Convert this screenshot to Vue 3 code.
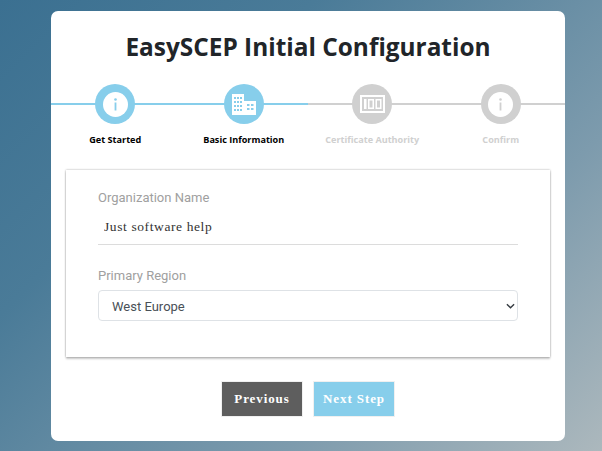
<template>
  <div class="page">
    <div class="card">
      <h1>EasySCEP Initial Configuration</h1>

      <div class="steps">
        <div v-for="step in steps" :key="step.label" class="step" :class="{ done: step.active }">
          <div class="circle">
            <svg v-if="step.icon === 'info'" viewBox="0 0 25 25" width="25" height="25">
              <circle cx="12.5" cy="12.5" r="12.5" fill="#fff" />
              <circle cx="12.5" cy="7.5" r="1.3" class="glyph" />
              <rect x="11.6" y="10.5" width="1.8" height="8" class="glyph" />
            </svg>
            <svg v-else-if="step.icon === 'building'" viewBox="0 0 25 21" width="25" height="21">
              <path fill="#fff" fill-rule="evenodd" d="M1 0h12v21H1zM3 3v2h2V3zm3 0v2h2V3zm3 0v2h2V3zM3 7v2h2V7zm3 0v2h2V7zm3 0v2h2V7zM3 11v2h2v-2zm3 0v2h2v-2zm3 0v2h2v-2zM3 15v2h2v-2zm3 0v2h2v-2zm3 0v2h2v-2z" />
              <path fill="#fff" fill-rule="evenodd" d="M13 7h12v14H13zm3 3v2h2.500v-2zm4 0v2h2.500v-2zm-4 4v2h2.500v-2zm4 0v2h2.500v-2z" />
            </svg>
            <svg v-else viewBox="0 0 25 18" width="25" height="18">
              <path fill="#fff" fill-rule="evenodd" d="M0 0h25v18H0zM2 2v14h21V2z" />
              <path fill="#fff" fill-rule="evenodd" d="M4 4h2.500v10H4zM8 4h6v10H8zm1.500 1.500v7h3v-7zM15.500 4h6v10h-6zM17 5.500v7h3v-7z" />
            </svg>
          </div>
          <div class="step-label">{{ step.label }}</div>
        </div>
      </div>

      <div class="panel">
        <label class="field-label">Organization Name</label>
        <input v-model="orgName" class="text-input" type="text" />

        <label class="field-label region-label">Primary Region</label>
        <div class="select-wrap">
          <select v-model="region" class="region-select">
            <option>West Europe</option>
            <option>North Europe</option>
          </select>
          <svg class="chevron" viewBox="0 0 10 6" width="9" height="6">
            <path d="M1 1l4 4 4-4" fill="none" stroke="#343a40" stroke-width="1.500" />
          </svg>
        </div>
      </div>

      <div class="actions">
        <button class="btn btn-prev">Previous</button>
        <button class="btn btn-next">Next Step</button>
      </div>
    </div>
  </div>
</template>

<script setup>
import { ref } from 'vue'

const orgName = ref('Just software help')
const region = ref('West Europe')

const steps = [
  { label: 'Get Started', icon: 'info', active: true },
  { label: 'Basic Information', icon: 'building', active: true },
  { label: 'Certificate Authority', icon: 'cert', active: false },
  { label: 'Confirm', icon: 'info', active: false }
]
</script>

<style>
html,
body {
  margin: 0;
}
</style>

<style scoped>
.page {
  box-sizing: border-box;
  width: 602px;
  height: 451px;
  padding: 11px 37px 10px 51px;
  overflow: hidden;
  background: linear-gradient(135deg, #3b7091 0%, #4a7b98 30%, #7d9bad 70%, #acb8bd 100%);
  font-family: "Open Sans", "Liberation Sans", sans-serif;
}

.card {
  box-sizing: border-box;
  height: 430px;
  padding-top: 19px;
  background: #fff;
  border-radius: 7px;
}

h1 {
  margin: 0;
  height: 54px;
  line-height: 33px;
  text-align: center;
  font-size: 24.4px;
  font-weight: 700;
  color: #212529;
}

.steps {
  display: grid;
  grid-template-columns: repeat(4, 1fr);
}

.step {
  position: relative;
  display: flex;
  flex-direction: column;
  align-items: center;
}

.step::before {
  content: '';
  position: absolute;
  top: 19px;
  left: 0;
  right: 0;
  height: 2px;
  background: #d0d0d0;
}

.step.done::before {
  background: #87ceeb;
}

.circle {
  position: relative;
  display: flex;
  align-items: center;
  justify-content: center;
  width: 40px;
  height: 40px;
  border-radius: 50%;
  background: #d0d0d0;
}

.done .circle {
  background: #87ceeb;
}

.glyph {
  fill: #d0d0d0;
}

.done .glyph {
  fill: #87ceeb;
}

.step-label {
  margin-top: 8px;
  line-height: 15px;
  font-size: 9.1px;
  font-weight: 700;
  color: #d0d0d0;
}

.done .step-label {
  color: #000;
}

.panel {
  box-sizing: border-box;
  display: flex;
  flex-direction: column;
  align-items: flex-start;
  height: 187px;
  margin: 23px 15px 0;
  padding: 18px 32px 0;
  background: #fff;
  box-shadow: 0 2px 2px rgba(0, 0, 0, 0.2), 0 0 2px rgba(0, 0, 0, 0.35);
}

.field-label {
  line-height: 19px;
  font-family: Roboto, sans-serif;
  font-size: 13px;
  color: #a0a0a0;
}

.region-label {
  margin-top: 21px;
}

.text-input {
  box-sizing: border-box;
  width: 100%;
  height: 38px;
  padding: 2px 6px 0;
  border: none;
  border-bottom: 1px solid #dcdcdc;
  outline: none;
  background: transparent;
  font-family: "Liberation Serif", serif;
  font-size: 13.5px;
  letter-spacing: 0.6px;
  color: #333;
}

.select-wrap {
  position: relative;
  width: 100%;
  height: 31px;
  margin-top: 5px;
}

.region-select {
  box-sizing: border-box;
  width: 100%;
  height: 31px;
  padding: 2px 13px 0;
  appearance: none;
  border: 1px solid #dee2e6;
  border-radius: 4px;
  background: #fff;
  font-family: Roboto, sans-serif;
  font-size: 13px;
  color: #495057;
}

.chevron {
  position: absolute;
  top: 13px;
  right: 3px;
}

.actions {
  display: flex;
  justify-content: center;
  gap: 10px;
  margin-top: 24px;
}

.btn {
  width: 82px;
  height: 36px;
  padding: 0;
  border: 1px solid #f0f0f0;
  color: #fff;
  font-family: "Liberation Serif", serif;
  font-size: 13px;
  font-weight: 700;
  letter-spacing: 0.9px;
}

.btn-prev {
  background: #5e5e5e;
}

.btn-next {
  background: #87ceeb;
}
</style>
